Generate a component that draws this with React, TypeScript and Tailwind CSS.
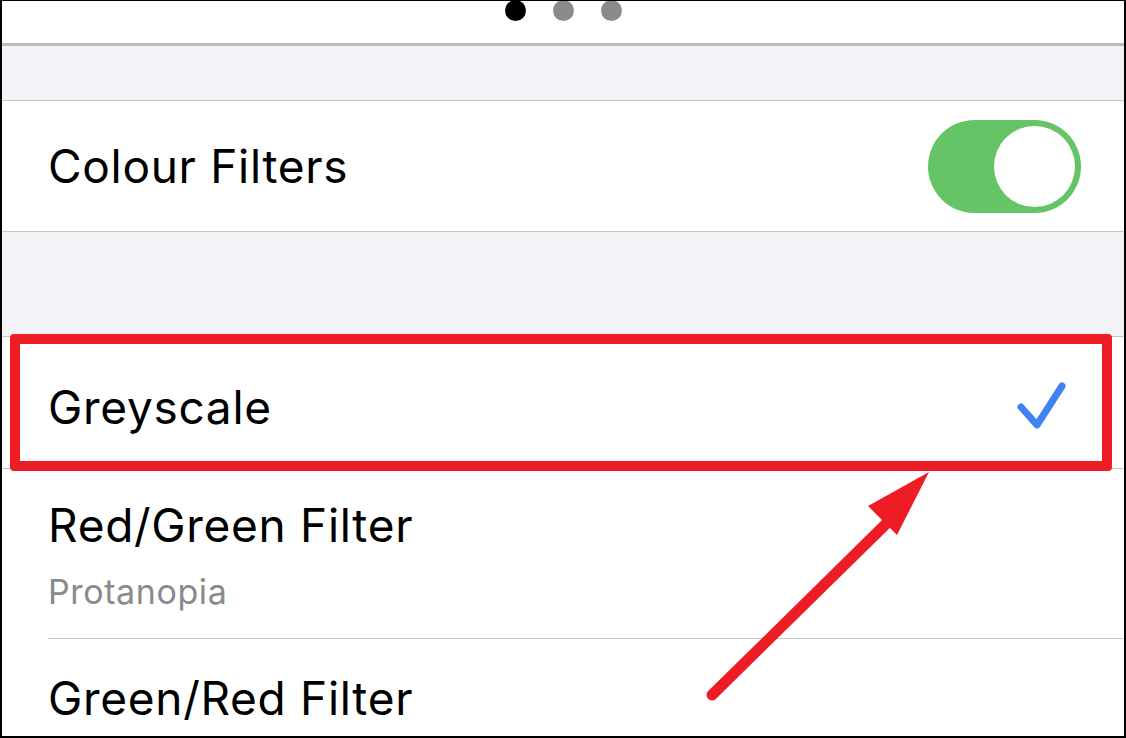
import React from "react";

const font = { fontFamily: "Inter, 'Noto Sans', sans-serif" };

function Toggle() {
  return (
    <div className="relative h-[93px] w-[153px] rounded-full bg-[#65c466]">
      <div className="absolute right-[6px] top-[6px] h-[81px] w-[81px] rounded-full bg-white" />
    </div>
  );
}

function Check() {
  return (
    <svg width="56" height="52" viewBox="0 0 56 52" className="mr-[56px]">
      <polyline
        points="7,26 23,44 48,5"
        fill="none"
        stroke="#4082f4"
        strokeWidth="7"
        strokeLinecap="round"
        strokeLinejoin="round"
      />
    </svg>
  );
}

export default function App() {
  return (
    <div
      className="relative h-[738px] w-[1126px] overflow-hidden bg-white text-black"
      style={font}
    >
      {/* page dots */}
      <div className="flex h-[43px] justify-center gap-[27px] pt-0">
        <span className="h-[21px] w-[21px] rounded-full bg-black" />
        <span className="h-[21px] w-[21px] rounded-full bg-[#8a8a8a]" />
        <span className="h-[21px] w-[21px] rounded-full bg-[#8a8a8a]" />
      </div>
      <div className="h-[3px] bg-[#bdbdbd]" />
      <div className="h-[54px] bg-[#f2f2f7]" />

      {/* Colour Filters */}
      <div className="flex h-[132px] items-center justify-between border-y border-[#c6c6c8] pl-[48px] pr-[45px]">
        <span className="text-[46px] leading-[46px] tracking-[0.7px]">Colour Filters</span>
        <Toggle />
      </div>

      <div className="h-[104px] bg-[#f2f2f7]" />

      {/* filter list */}
      <div className="border-t border-[#c6c6c8]">
        <div className="flex h-[132px] items-center justify-between border-b border-[#c6c6c8] pl-[48px] pt-[8px]">
          <span className="text-[46px] leading-[46px] tracking-[0.7px]">Greyscale</span>
          <Check />
        </div>
        <div className="pl-[48px]">
          <div className="flex h-[170px] flex-col border-b border-[#c6c6c8] pt-[33px]">
            <span className="text-[46px] leading-[46px] tracking-[0.7px]">Red/Green Filter</span>
            <span className="mt-[27px] text-[34px] leading-[34px] tracking-[0.6px] text-[#8a8a8e]">
              Protanopia
            </span>
          </div>
          <div className="pt-[36px]">
            <span className="text-[46px] leading-[46px] tracking-[0.7px]">Green/Red Filter</span>
          </div>
        </div>
      </div>

      {/* annotation */}
      <div className="pointer-events-none absolute left-[10px] top-[334px] h-[137px] w-[1102px] rounded-[4px] border-[10px] border-[#ee1d25]" />
      <svg
        className="pointer-events-none absolute left-0 top-0"
        width="1126"
        height="738"
        viewBox="0 0 1126 738"
      >
        <line
          x1="712"
          y1="695"
          x2="890"
          y2="520"
          stroke="#ee1d25"
          strokeWidth="11"
          strokeLinecap="round"
        />
        <polygon points="929,472 868,506 897,535" fill="#ee1d25" />
      </svg>

      {/* screenshot frame */}
      <div className="pointer-events-none absolute inset-0 border-2 border-t-[1px] border-black" />
    </div>
  );
}
